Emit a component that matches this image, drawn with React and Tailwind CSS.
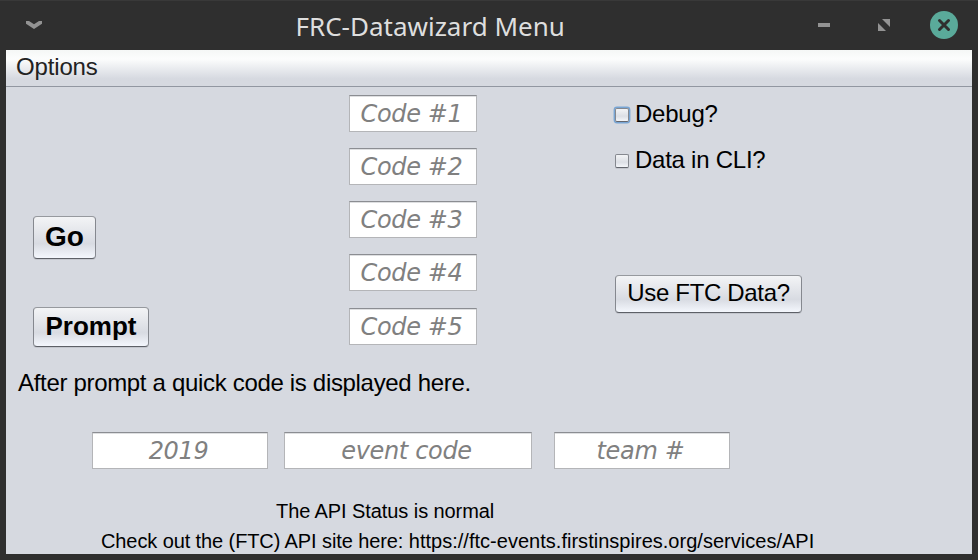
const fieldBase =
  "flex h-[37px] items-center justify-center border border-[#b4b5b8] border-t-[#8b8d92] bg-white pr-[3px] font-['DejaVu_Sans',sans-serif] text-[24px] leading-none tracking-[-0.35px] italic text-[#808080] whitespace-nowrap shadow-[inset_0_1px_0_#dedfe1]";

const buttonBase =
  "flex justify-center rounded-[4px] border border-[#85888f] border-t-[#96999e] border-b-[#5d6067] bg-linear-to-b from-[#f3f4f6] via-[#d8dbe2] via-65% to-[#f4f7fd] text-black whitespace-nowrap shadow-[0_1px_0_#c3c6cd]";

function Field({ className, children }) {
  return <div className={`${fieldBase} ${className}`}>{children}</div>;
}

function Button({ className, children }) {
  return <button className={`${buttonBase} ${className}`}>{children}</button>;
}

function Check({ focused, className, children }) {
  return (
    <label className={`flex h-7 items-center text-[24px] leading-7 tracking-[-0.25px] whitespace-nowrap ${className}`}>
      <span
        className={`mt-px mr-[6px] ml-px block h-[14px] w-[14px] rounded-[2px] border border-[#85888f] border-b-[#63666e] bg-linear-to-b from-[#f3f4f6] via-[#dcdfe5] via-60% to-[#f4f6fa] ${
          focused ? "shadow-[0_0_0_1.4px_#78a5d4]" : "shadow-[0_1px_0_#c3c6cd]"
        }`}
      />
      {children}
    </label>
  );
}

function TitleBar() {
  return (
    <header className="flex h-[50px] justify-between border-t border-[#393939]">
      <svg className="mt-[19px] ml-[25px] h-[10px] w-[18px]" viewBox="0 0 18 10">
        <path d="M1 1H4L9 4.2L14 1H17V3.8L9 9L1 3.8Z" fill="#939393" />
      </svg>
      <h1 className="w-[270px] pt-[7px] font-['Noto_Sans','Open_Sans',sans-serif] text-[26px] leading-[36px] font-normal whitespace-nowrap text-[#dedede]">
        FRC-Datawizard Menu
      </h1>
      <div className="flex pr-5">
        <svg className="mt-[22px] h-1 w-3" viewBox="0 0 12 4">
          <rect width="12" height="4" fill="#939393" />
        </svg>
        <svg className="mt-[18px] ml-12 h-3 w-3" viewBox="0 0 12 12">
          <path d="M4 0H12V8ZM0 4V12H8Z" fill="#939393" />
        </svg>
        <svg className="mt-[10px] ml-10 h-7 w-7" viewBox="0 0 28 28">
          <circle cx="14" cy="14" r="14" fill="#5aaa9a" />
          <path d="M9.5 9.5L18.5 18.5M18.5 9.5L9.5 18.5" stroke="#2f2f2f" strokeWidth="3" strokeLinecap="round" />
        </svg>
      </div>
    </header>
  );
}

export default function App() {
  return (
    <div className="h-[560px] w-[978px] overflow-hidden bg-[#2f2f2f] font-['Liberation_Sans',Arial,sans-serif] text-black">
      <TitleBar />
      <div className="mx-[6px] h-[504px] overflow-hidden bg-[#d6d9e0]">
        <nav className="h-[37px] border-b border-[#9297a1] bg-linear-to-b from-[#f5f7f6] via-[#fcfdfd] via-25% to-[#d6d9e0] to-80% pt-[3px] pl-[10px] text-[24px] leading-7 tracking-[-0.15px] text-[#222222]">
          Options
        </nav>
        <main>
          <div className="flex h-[275px]">
            <div className="w-[343px] pl-[27px]">
              <Button className="mt-[129px] h-[43px] w-[63px] pt-[4px] text-[28px] leading-8 font-bold">Go</Button>
              <Button className="mt-12 h-10 w-[116px] pt-[3px] text-[26px] leading-[30px] font-bold">Prompt</Button>
            </div>
            <div className="flex w-[128px] flex-col gap-4 pt-2">
              <Field className="w-full">Code #1</Field>
              <Field className="w-full">Code #2</Field>
              <Field className="w-full">Code #3</Field>
              <Field className="w-full">Code #4</Field>
              <Field className="mt-px w-full">Code #5</Field>
            </div>
            <div className="ml-[137px]">
              <Check focused className="mt-[13px]">Debug?</Check>
              <Check className="mt-[18px]">Data in CLI?</Check>
              <Button className="mt-[101px] ml-px h-[38px] w-[187px] pt-[3px] text-[24px] leading-7 tracking-[-0.33px]">Use FTC Data?</Button>
            </div>
          </div>
          <p className="mt-[7px] pl-3 text-[24px] leading-7 tracking-[-0.32px] whitespace-nowrap">
            After prompt a quick code is displayed here.
          </p>
          <div className="mt-[35px] flex pl-[86px]">
            <Field className="w-[176px]">2019</Field>
            <Field className="ml-4 w-[248px]">event code</Field>
            <Field className="ml-[22px] w-[176px]">team #</Field>
          </div>
          <p className="mt-[30px] pl-[270px] text-[20px] leading-6 tracking-[-0.08px] whitespace-nowrap">
            The API Status is normal
          </p>
          <p className="mt-[6px] pl-[95px] text-[20px] leading-6 whitespace-nowrap">
            <span className="tracking-[-0.1px]">Check out the (FTC) API site here: </span>
            <span className="tracking-[0.02px]">https://ftc-events.firstinspires.org/services/API</span>
          </p>
        </main>
      </div>
    </div>
  );
}
